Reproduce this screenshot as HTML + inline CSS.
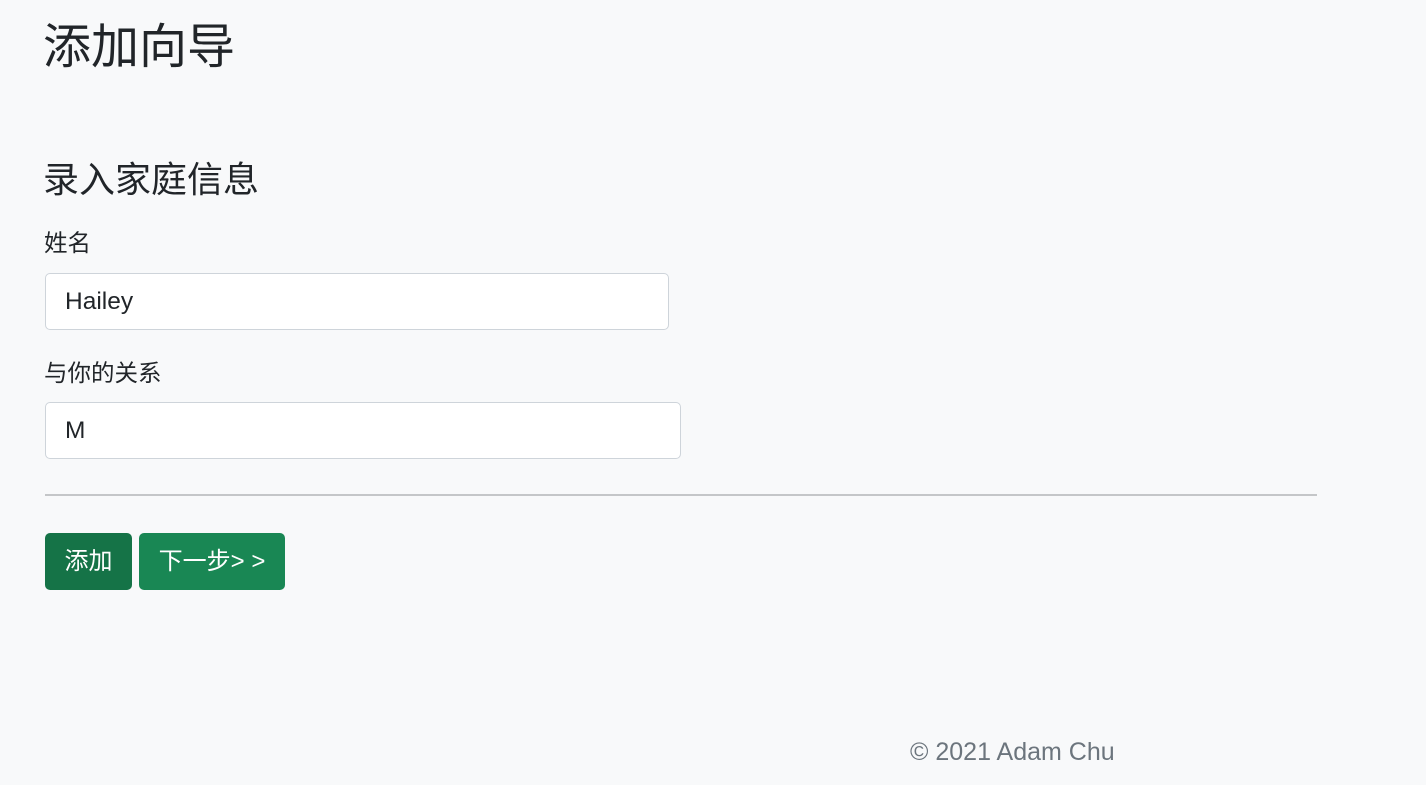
<!DOCTYPE html>
<html><head><meta charset="utf-8"><style>
body{margin:0;background:#f8f9fa;font-family:"Liberation Sans","Noto Sans CJK SC",sans-serif;color:#212529;width:1426px;height:785px;position:relative;overflow:hidden}
.a{position:absolute}
h1{position:absolute;left:43px;top:17px;margin:0;font-size:48px;font-weight:400;line-height:62px}
h3{position:absolute;left:43px;top:158px;margin:0;font-size:36px;font-weight:400;line-height:44px}
.lbl{font-size:23.5px;line-height:30px}
.inp{position:absolute;background:#fff;border:1px solid #ced4da;border-radius:5px;box-sizing:border-box;height:57px;font-size:24.5px;padding-left:19px;line-height:55px}
.btn{position:absolute;top:533px;height:57px;border-radius:5px;color:#fff;font-size:24px;line-height:57px;text-align:center}
</style></head><body>
<h1>添加向导</h1>
<h3>录入家庭信息</h3>
<div class="a lbl" style="left:44px;top:228px">姓名</div>
<div class="inp" style="left:45px;top:273px;width:624px">Hailey</div>
<div class="a lbl" style="left:44px;top:358px">与你的关系</div>
<div class="inp" style="left:45px;top:402px;width:636px">M</div>
<div class="a" style="left:45px;top:494px;width:1272px;height:2px;background:#c4c6c8"></div>
<div class="btn" style="left:45px;width:87px;background:#157347">添加</div>
<div class="btn" style="left:139px;width:146px;background:#198754">下一步&gt; &gt;</div>
<div class="a" style="left:910px;top:737px;font-size:25px;color:#6c757d;line-height:30px">© 2021 Adam Chu</div>
</body></html>
